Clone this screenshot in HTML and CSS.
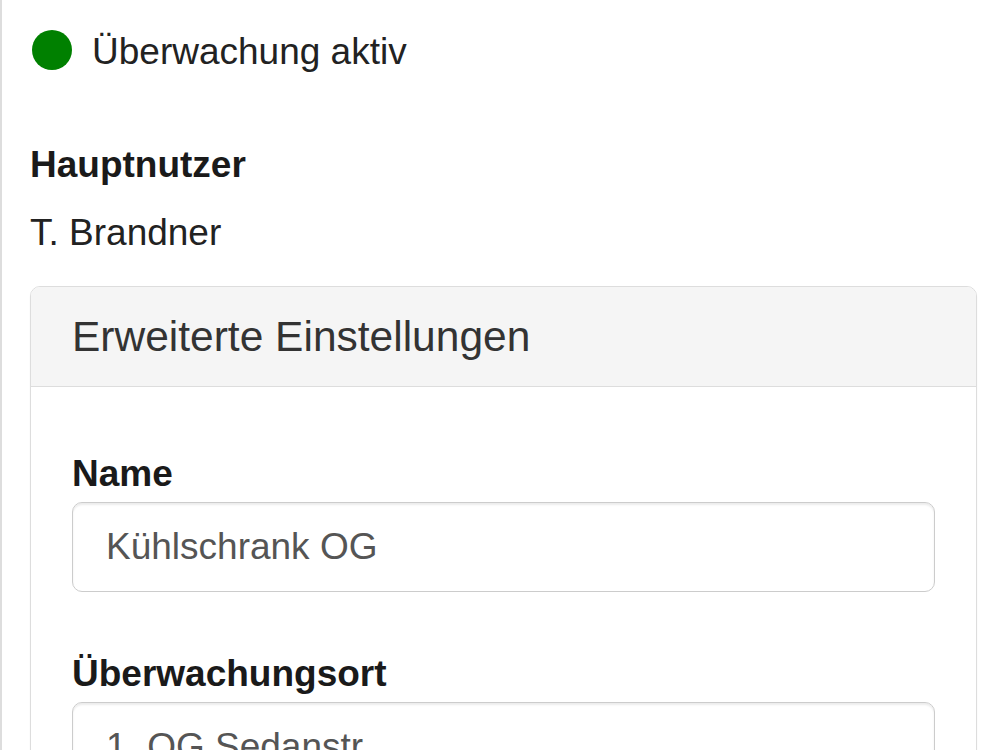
FILE: index.html
```html
<!DOCTYPE html>
<html lang="de">
<head>
  <meta charset="UTF-8" />
  <meta name="viewport" content="width=device-width, initial-scale=1.0"/>
  <title>Gerät bearbeiten</title>
  <link rel="stylesheet" href="styles.css">
</head>
<body>
  <div class="container">
    <div class="status">
      <span class="status-dot"></span>
      <span class="status-text">Überwachung aktiv</span>
    </div>

    <h4 class="field-title">Hauptnutzer</h4>
    <p class="field-value">T. Brandner</p>

    <div class="panel">
      <div class="panel-heading">
        <h3 class="panel-title">Erweiterte Einstellungen</h3>
      </div>
      <div class="panel-body">
        <div class="form-group">
          <label for="name">Name</label>
          <input id="name" type="text" class="form-control" value="Kühlschrank OG">
        </div>
        <div class="form-group">
          <label for="ort">Überwachungsort</label>
          <input id="ort" type="text" class="form-control" value="1. OG Sedanstr.">
        </div>
        <div class="form-group">
          <label for="typ">Gerätetyp</label>
          <input id="typ" type="text" class="form-control" value="Kühlschrank">
        </div>
      </div>
    </div>
  </div>
</body>
</html>
```

FILE: styles.css
```css
* {
  box-sizing: border-box;
  margin: 0;
  padding: 0;
}

html, body {
  height: 100%;
  overflow: hidden;
}

body {
  font-family: 'Liberation Sans', Arial, sans-serif;
  font-size: 37px;
  color: #333;
  background: #fff;
}

.container {
  border-left: 2px solid #ddd;
  padding: 30px 23px 0 28px;
  min-height: 100%;
}

.status {
  display: flex;
  align-items: center;
  gap: 20px;
  height: 40px;
  margin-left: 2px;
}

.status-dot {
  width: 40px;
  height: 40px;
  border-radius: 50%;
  background: #008000;
}

.status-text {
  line-height: 40px;
  padding-top: 3px;
  color: #222;
}

.field-title {
  font-size: 37px;
  font-weight: 700;
  line-height: 51px;
  margin-top: 69px;
  color: #1a1a1a;
}

.field-value {
  line-height: 51px;
  margin-top: 17px;
  color: #222;
}

.panel {
  margin-top: 28px;
  border: 1px solid #ddd;
  border-radius: 10px;
  box-shadow: 0 2px 2px rgba(0, 0, 0, 0.05);
}

.panel-heading {
  background: #f5f5f5;
  border-bottom: 1px solid #ddd;
  border-radius: 9px 9px 0 0;
  padding: 27px 41px;
}

.panel-title {
  font-size: 42.5px;
  font-weight: 400;
  line-height: 45px;
  color: #333;
}

.panel-body {
  padding: 61px 41px 38px;
}

.form-group {
  margin-bottom: 56px;
}

.form-group label {
  display: block;
  font-weight: 700;
  line-height: 51px;
  margin-bottom: 3px;
  color: #1a1a1a;
}

.form-control {
  display: block;
  width: 100%;
  height: 90px;
  padding: 0 33px;
  font-family: inherit;
  font-size: 37px;
  color: #555;
  background: #fff;
  border: 1px solid #ccc;
  border-radius: 10px;
  box-shadow: inset 0 2px 2px rgba(0, 0, 0, 0.075);
  outline: none;
}
```
